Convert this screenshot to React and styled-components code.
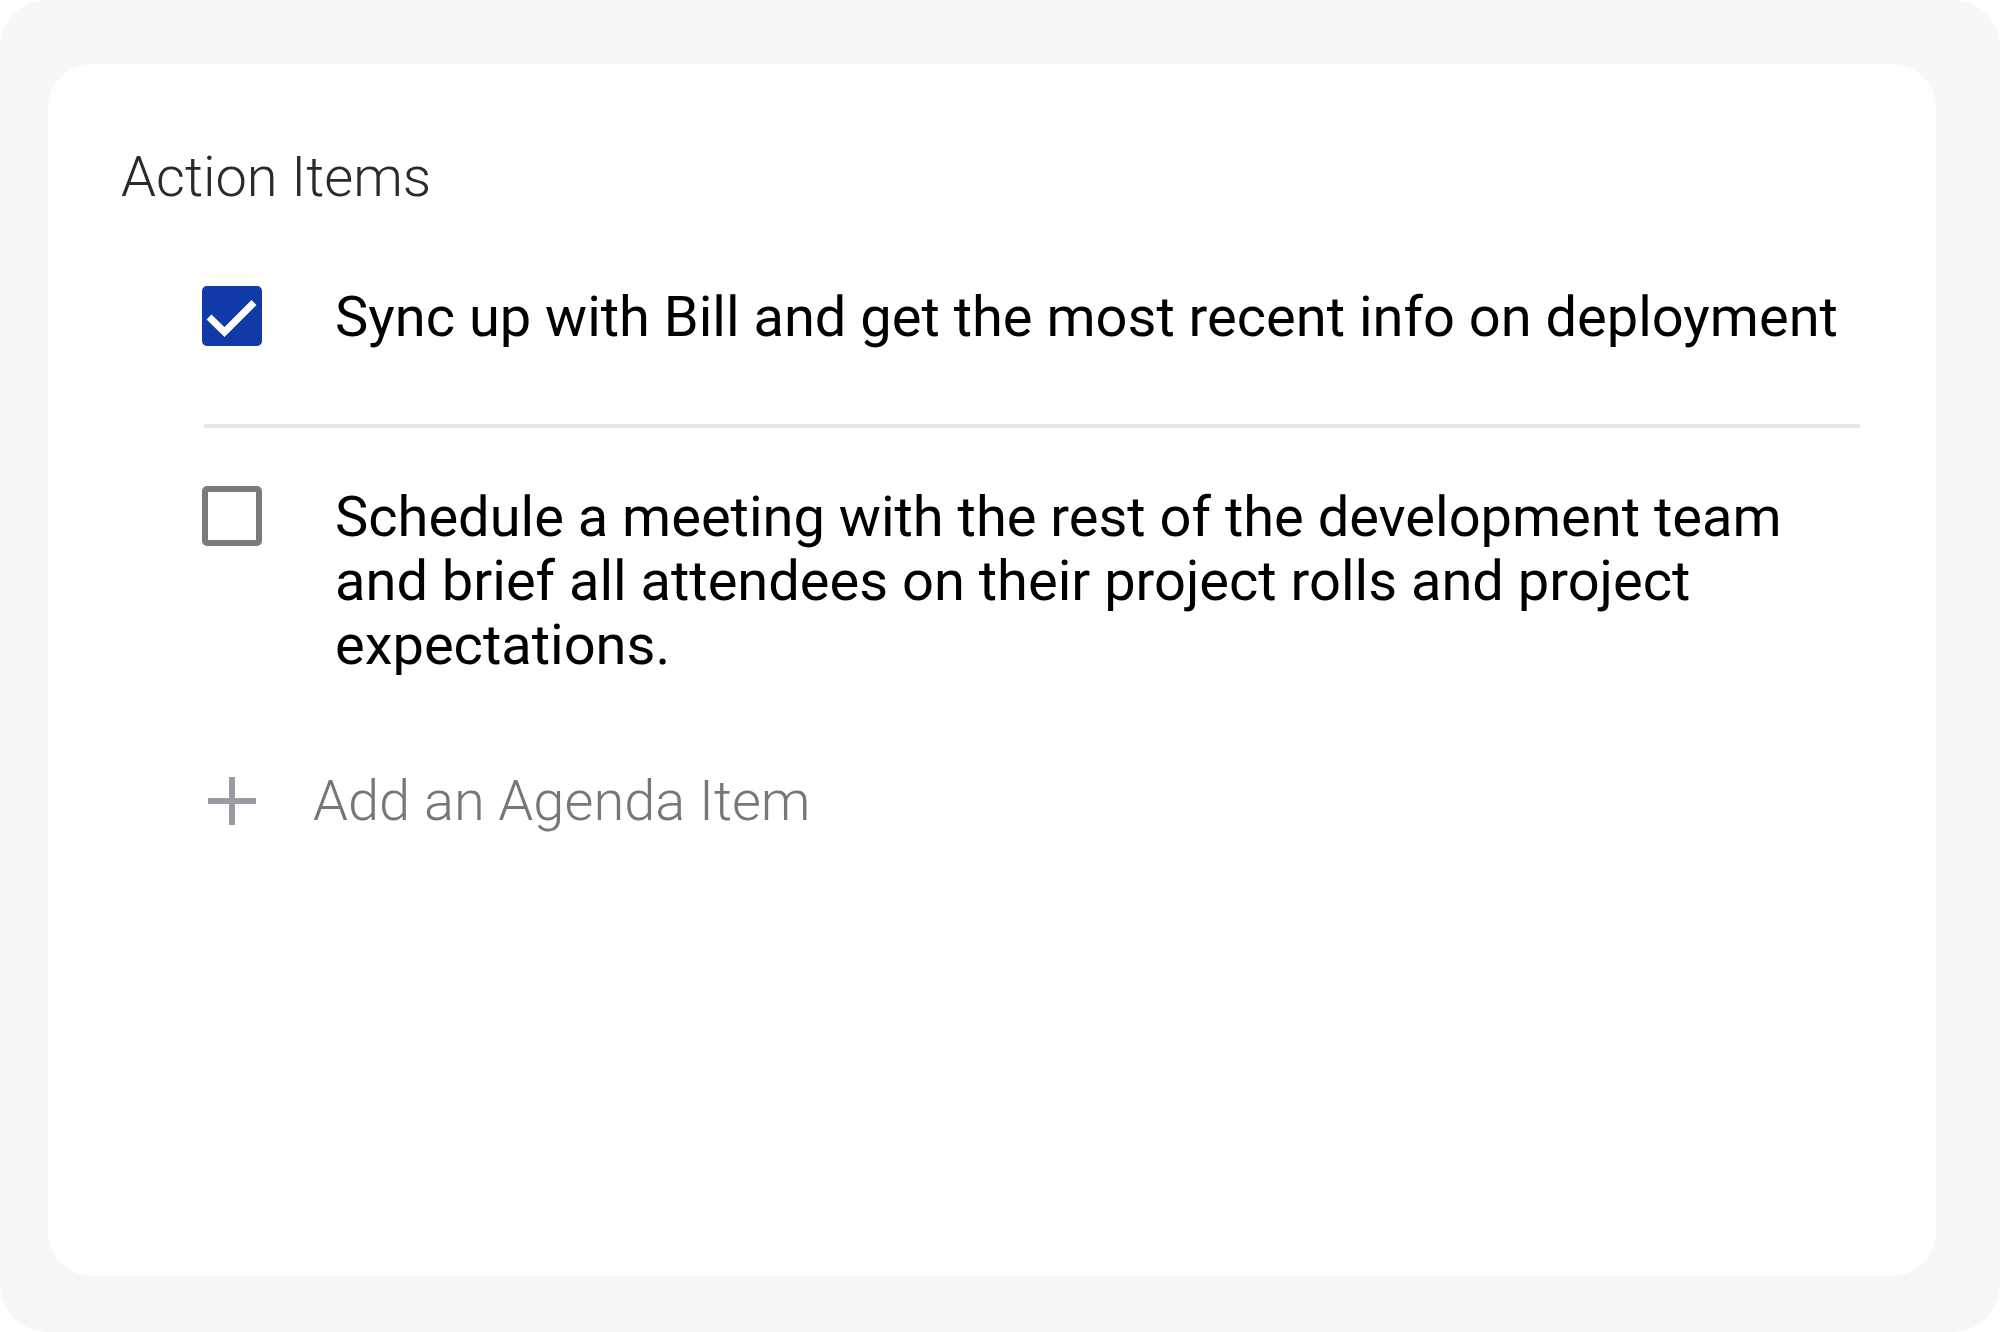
import React from 'react';
import styled, { createGlobalStyle } from 'styled-components';

const GlobalStyle = createGlobalStyle`
  html, body {
    margin: 0;
    padding: 0;
    background: #ffffff;
  }
  body {
    font-family: Roboto, "Liberation Sans", Arial, sans-serif;
  }
`;

const items = [
  { id: 1, done: true, text: 'Sync up with Bill and get the most recent info on deployment' },
  {
    id: 2,
    done: false,
    text: 'Schedule a meeting with the rest of the development team and brief all attendees on their project rolls and project expectations.',
  },
];

const CheckIcon = () => (
  <svg width="60" height="60" viewBox="0 0 60 60" fill="none">
    <path d="M7 31 L22.5 46 L52 16.5" stroke="#ffffff" strokeWidth="7" />
  </svg>
);

const PlusIcon = () => (
  <svg width="48" height="48" viewBox="0 0 48 48">
    <rect x="0" y="21" width="48" height="6" fill="#9a9ca5" />
    <rect x="21" y="0" width="6" height="48" fill="#9a9ca5" />
  </svg>
);

const App = () => {
  return (
    <>
      <GlobalStyle />
      <Frame>
        <Card>
          <Title>Action Items</Title>
          <List>
            {items.map((item, i) => (
              <React.Fragment key={item.id}>
                {i > 0 && <Divider />}
                <Row>
                  <Checkbox $checked={item.done}>{item.done && <CheckIcon />}</Checkbox>
                  <ItemText>{item.text}</ItemText>
                </Row>
              </React.Fragment>
            ))}
            <AddRow>
              <PlusSlot>
                <PlusIcon />
              </PlusSlot>
              <AddText>Add an Agenda Item</AddText>
            </AddRow>
          </List>
        </Card>
      </Frame>
    </>
  );
};

const Frame = styled.div`
  width: 2000px;
  height: 1332px;
  box-sizing: border-box;
  background: #f6f7f9;
  border-radius: 48px;
  padding: 64px 64px 56px 48px;
  display: flex;
`;

const Card = styled.div`
  flex: 1;
  background: #ffffff;
  border-radius: 44px;
  padding: 81px 76px 0 73px;
  display: flex;
  flex-direction: column;
`;

const Title = styled.h2`
  margin: 0;
  font-family: Roboto, "Liberation Sans", Arial, sans-serif;
  font-weight: 300;
  font-size: 56px;
  line-height: 64px;
  color: #2a2a2a;
`;

const List = styled.div`
  margin: 76px 0 0 81px;
  display: flex;
  flex-direction: column;
`;

const Row = styled.div`
  display: flex;
  align-items: flex-start;
  gap: 73px;
`;

const Checkbox = styled.div`
  flex: 0 0 auto;
  width: 60px;
  height: 60px;
  margin-top: 1px;
  box-sizing: border-box;
  border-radius: 5px;
  background: ${(p) => (p.$checked ? '#0f3aa8' : '#ffffff')};
  border: ${(p) => (p.$checked ? 'none' : '6px solid #7b7b7b')};
  display: flex;
  align-items: center;
  justify-content: center;
`;

const ItemText = styled.div`
  flex: 1;
  font-size: 56px;
  line-height: 64px;
  font-weight: 400;
  color: #000000;
`;

const Divider = styled.div`
  height: 4px;
  background: #e6e6e6;
  margin: 75px 0 57px 2px;
`;

const AddRow = styled.div`
  display: flex;
  align-items: center;
  gap: 51px;
  margin-top: 92px;
  height: 64px;
`;

const PlusSlot = styled.div`
  width: 60px;
  height: 60px;
  display: flex;
  align-items: center;
  justify-content: center;
`;

const AddText = styled.span`
  font-weight: 300;
  font-size: 56px;
  line-height: 64px;
  color: #777777;
`;

export default App;
